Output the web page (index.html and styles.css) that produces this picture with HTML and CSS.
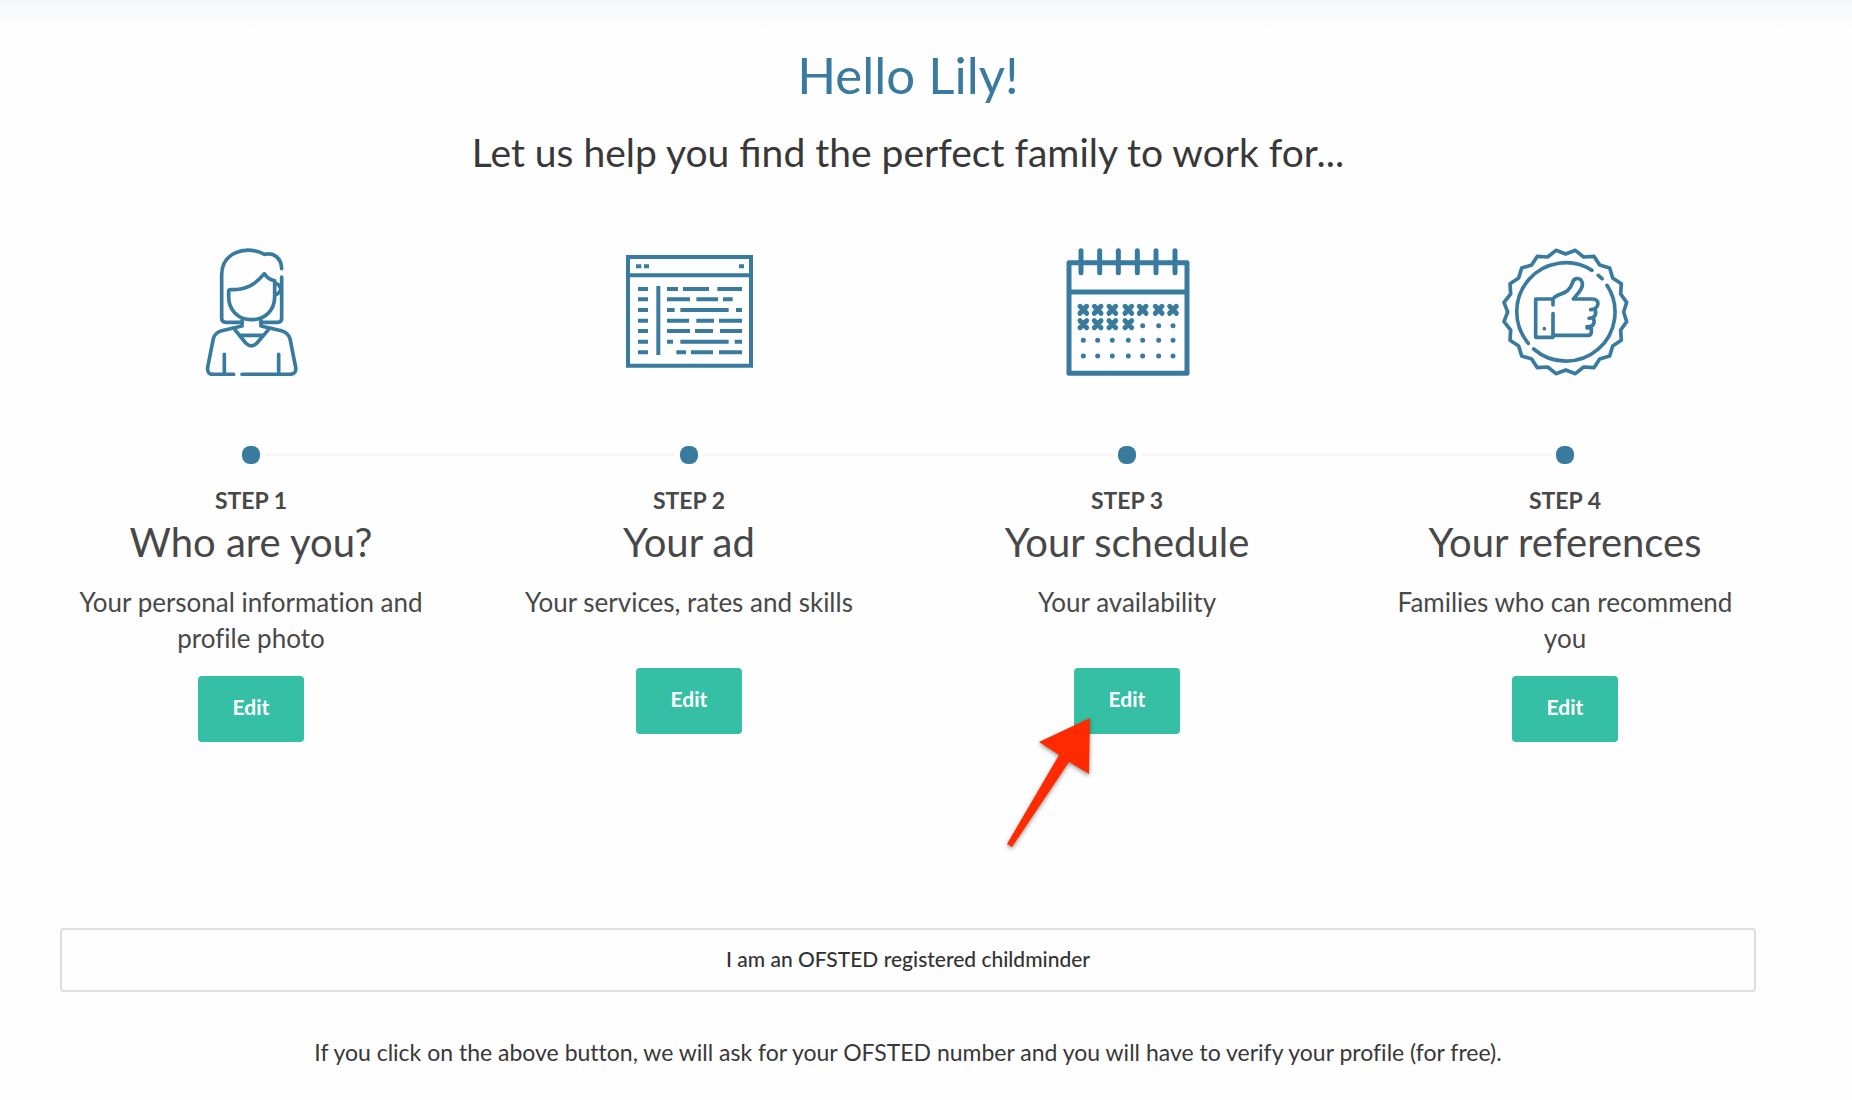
FILE: index.html
```
<!DOCTYPE html>
<html lang="en">
<head>
  <meta charset="UTF-8" />
  <meta name="viewport" content="width=device-width, initial-scale=1.0"/>
  <title>Your profile</title>
  <link rel="stylesheet" href="styles.css">
</head>
<body>
  <main class="dashboard">
    <header class="intro">
      <h1>Hello Lily!</h1>
      <p>Let us help you find the perfect family to work for...</p>
    </header>

    <!-- Profile steps -->
    <section class="steps">
      <div class="step">
        <svg class="step-icon" viewBox="22 54 384 384" stroke-width="11" stroke-linecap="round" stroke-linejoin="round" aria-hidden="true">
          <path d="M306 116C305 85 283 66 255 73C192 42 126 72 126 135V264Q126 277 139 277H188M306 141V264Q306 277 294 277H243"/>
          <path d="M285 152V200C285 243 254 269 215 269C176 269 147 240 147 200V184Q147 179 153 179C200 180 228 163 254 131Q264 147 285 152ZM288 160Q296 160 303 175M288 194Q297 192 303 180"/>
          <path d="M187 272V288L126 302Q105 308 101 326L84 412Q82 433 98 433H162M187 433H333Q351 431 348 412L331 326Q326 308 305 302L244 288V272M134 373V430M297 373V430"/>
          <path d="M165 298L198 339Q215 356 232 339L267 298M180 316H250"/>
        </svg>
        <div class="track"><span class="dot"></span></div>
        <div class="step-number">STEP 1</div>
        <h2>Who are you?</h2>
        <p class="step-text">Your personal information and profile photo</p>
        <div class="action">
          <button type="button" class="edit">Edit</button>
        </div>
      </div>

      <div class="step">
        <svg class="step-icon" viewBox="45 24 384 384" stroke-width="12" aria-hidden="true">
          <path d="M54 51H423V377H54ZM54 106H423M145 138V345"/>
          <path d="M78 79H94M102 79H117M387 79H402"/>
          <path d="M84 147H114M84 178H114M84 210H114M84 242H114M84 273H114M84 305H114M84 337H114"/>
          <path d="M171 147H204M219 147H297M322 147H396M171 178H240M259 178H324M339 178H368M171 210H194M211 210H356M378 210H396M171 242H237M259 242H312M327 242H396M171 273H240M255 273H309M330 273H396M171 305H189M211 305H356M374 305H396M199 337H228M243 337H309M327 337H396"/>
        </svg>
        <div class="track"><span class="dot"></span></div>
        <div class="step-number">STEP 2</div>
        <h2>Your ad</h2>
        <p class="step-text">Your services, rates and skills</p>
        <div class="action">
          <button type="button" class="edit">Edit</button>
        </div>
      </div>

      <div class="step">
        <svg class="step-icon" viewBox="39 39 384 384" stroke-width="15" stroke-linecap="round" stroke-linejoin="round" aria-hidden="true">
          <path d="M57 83H411V415H57ZM57 171H411"/>
          <path d="M93 47V113M149 47V113M205 47V113M262 47V113M318 47V113M375 47V113"/>
          <!-- booked days -->
          <path d="M90 214L110 235M110 214L90 235M133 214L153 235M153 214L133 235M177 214L197 235M197 214L177 235M225 214L245 235M245 214L225 235M268 214L288 235M288 214L268 235M316 214L336 235M336 214L316 235M359 214L379 235M379 214L359 235"/>
          <path d="M90 257L110 278M110 257L90 278M133 257L153 278M153 257L133 278M177 257L197 278M197 257L177 278M225 257L245 278M245 257L225 278"/>
          <!-- free days -->
          <path d="M278 272h0M326 272h0M369 272h0M100 316h0M143 316h0M187 316h0M235 316h0M278 316h0M326 316h0M369 316h0M100 363h0M143 363h0M187 363h0M235 363h0M278 363h0M326 363h0M369 363h0"/>
        </svg>
        <div class="track"><span class="dot"></span></div>
        <div class="step-number">STEP 3</div>
        <h2>Your schedule</h2>
        <p class="step-text">Your availability</p>
        <div class="action">
          <button type="button" class="edit">Edit</button>
          <svg class="arrow" viewBox="0 0 100 145" aria-hidden="true">
            <path d="M90 8L39 32L59 45L7 134L12 137L69 52L89 64Z"/>
          </svg>
        </div>
      </div>

      <div class="step">
        <svg class="step-icon" viewBox="34 39 384 384" stroke-width="11" stroke-linecap="round" stroke-linejoin="round" aria-hidden="true">
          <path d="M228 57L257 46L282 66L313 64L330 90L360 99L369 129L395 146L393 177L411 202L402 231L411 260L393 285L395 316L369 333L360 363L330 372L313 398L282 396L257 416L228 405L199 416L174 396L143 398L126 372L96 363L87 333L61 316L63 285L43 260L54 231L43 202L63 177L61 146L87 129L96 99L126 90L143 64L174 66L199 46Z"/>
          <path d="M307 106A147 147 0 0 0 116 325M132 342A147 147 0 0 0 352 151M326 121L337 131"/>
          <path d="M190 210V192H138V307H190V236M194 301H294Q305 301 305 290V279H292M190 192C202 174 238 180 248 144C252 128 266 128 274 135C288 154 264 176 251 192H308C334 192 328 224 303 224M315 222C323 236 316 250 298 250M311 250C317 264 310 278 292 275"/>
          <path d="M164 281h0"/>
        </svg>
        <div class="track"><span class="dot"></span></div>
        <div class="step-number">STEP 4</div>
        <h2>Your references</h2>
        <p class="step-text">Families who can recommend you</p>
        <div class="action">
          <button type="button" class="edit">Edit</button>
        </div>
      </div>
    </section>

    <!-- Childminder registration -->
    <section class="ofsted">
      <button type="button" class="ofsted-button">I am an OFSTED registered childminder</button>
      <p>If you click on the above button, we will ask for your OFSTED number and you will have to verify your profile (for free).</p>
    </section>
  </main>
</body>
</html>
```
FILE: styles.css
```
* {
  box-sizing: border-box;
}

body {
  margin: 0;
  background: #fefefe linear-gradient(#f5f7f9, #fefefe) no-repeat top / 100% 28px;
  color: #383838;
  font-family: Lato, "Open Sans", sans-serif;
}

h1, h2, p {
  margin: 0;
  font-weight: normal;
}

.dashboard {
  padding: 44px 96px 0 60px;
  text-align: center;
}

.intro h1 {
  color: #397b9f;
  font-size: 51px;
  line-height: 62px;
}

.intro p {
  margin-top: 22px;
  font-size: 39px;
  line-height: 48px;
}

/* Steps */
.steps {
  display: grid;
  grid-template-columns: repeat(4, 1fr);
  margin: 72px -28px 0;
}

.step {
  color: #484848;
}

.step-icon {
  display: block;
  width: 128px;
  height: 128px;
  margin: 0 auto;
  fill: none;
  stroke: #397b9f;
}

.track {
  display: flex;
  align-items: center;
  margin: 70px 0 22px;
}

/* line on both sides of the dot */
.track::before,
.track::after {
  content: "";
  flex: 1;
  height: 2px;
  background: #f5f5f5;
}

.step:first-child .track::before,
.step:last-child .track::after {
  background: none;
}

.dot {
  width: 18px;
  height: 18px;
  margin: 0 5px;
  border-radius: 8px;
  background: #397b9f;
}

.step-number {
  font-size: 23px;
  font-weight: bold;
  line-height: 28px;
}

.step h2 {
  margin-top: 2px;
  font-size: 40px;
  line-height: 52px;
}

.step-text {
  min-height: 64px;
  margin: 16px 40px 20px;
  font-size: 26px;
  font-variant-ligatures: none;
  line-height: 36px;
}

.action {
  position: relative;
  width: 106px;
  margin: 0 auto;
}

.edit {
  display: block;
  width: 100%;
  height: 66px;
  padding: 0 0 6px;
  border: none;
  border-radius: 4px;
  background: #35bfa5;
  color: #fff;
  font-family: inherit;
  font-size: 21px;
  font-weight: bold;
  cursor: pointer;
}

/* Pointer over the schedule button */
.arrow {
  position: absolute;
  top: 42px;
  left: -74px;
  width: 100px;
  height: 145px;
  fill: #ff2a00;
  filter: drop-shadow(0 2px 2px rgba(0, 0, 0, 0.4));
  pointer-events: none;
}

/* OFSTED */
.ofsted {
  margin-top: 186px;
}

.ofsted-button {
  display: block;
  width: 100%;
  height: 64px;
  padding: 0 0 4px;
  border: 2px solid #dbe0df;
  border-radius: 4px;
  background: #fefefe;
  color: #333;
  font-family: inherit;
  font-size: 21px;
  font-weight: 500;
  cursor: pointer;
}

.ofsted p {
  margin-top: 44px;
  font-size: 23px;
  font-variant-ligatures: none;
  line-height: 32px;
}
```
